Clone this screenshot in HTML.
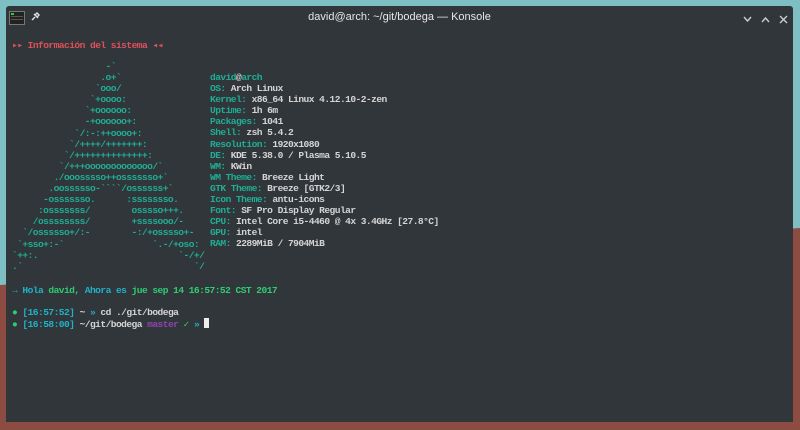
<!DOCTYPE html>
<html><head><meta charset="utf-8"><style>
html,body{margin:0;padding:0;width:800px;height:430px;overflow:hidden;background:#7dbfc2;}
.red{position:absolute;left:0;top:0;width:800px;height:430px;background:#8c4c42;clip-path:polygon(0 285px,800px 228px,800px 430px,0 430px);}
.win{position:absolute;left:6px;top:6px;width:787px;height:416px;background:#31363b;border-radius:3px 3px 0 0;}
.title{position:absolute;left:0;right:0;top:5px;text-align:center;font:11px "Liberation Sans",sans-serif;color:#e6e6e6;}
pre{margin:0;position:absolute;font-family:"Liberation Mono",monospace;font-size:9.6px;letter-spacing:-0.56px;line-height:11.1px;color:#d4d4d4;font-weight:bold;}
.t{color:#1fae94;} .g{color:#2ecc71;} .b{color:#1d99f3;} .r{color:#e0505a;} .p{color:#8e44ad;} .w{color:#d4d4d4;} .cb{color:#1fb2c8;}
.cur{display:inline-block;width:5px;height:10px;background:#eee;vertical-align:-1px;}
</style></head><body>
<div class="red"></div>
<div class="win">
 <svg style="position:absolute;left:3px;top:5px" width="16" height="14"><rect x="0.5" y="0.5" width="15" height="13" fill="#222" stroke="#777"/><rect x="2" y="2" width="3" height="2" fill="#3c3"/><rect x="2" y="5" width="12" height="1" fill="#555"/><rect x="2" y="8" width="12" height="1" fill="#555"/></svg>
 <svg style="position:absolute;left:24px;top:6px" width="10" height="10"><path d="M2 8L5 5M4 2L8 6M5 3L7 1L9 3L7 5" stroke="#ddd" stroke-width="1.5" fill="none"/></svg>
 <div class="title">david@arch: ~/git/bodega — Konsole</div>
 <svg style="position:absolute;left:737px;top:9px" width="45" height="9"><path d="M1 2L4.5 6L8 2M19 7L22.5 3L26 7M37 1L44 8M44 1L37 8" stroke="#ccc" stroke-width="1.4" fill="none"/></svg>
</div>
<pre class="r" style="left:12px;top:40px">▸▸ Información del sistema ◂◂</pre>
<pre class="t" style="left:12px;top:61px">                  -&#96;
                 .o+&#96;
                &#96;ooo/
               &#96;+oooo:
              &#96;+oooooo:
              -+oooooo+:
            &#96;/:-:++oooo+:
           &#96;/++++/+++++++:
          &#96;/++++++++++++++:
         &#96;/+++ooooooooooooo/&#96;
        ./ooosssso++osssssso+&#96;
       .oossssso-&#96;&#96;&#96;&#96;/ossssss+&#96;
      -osssssso.      :ssssssso.
     :osssssss/        osssso+++.
    /ossssssss/        +ssssooo/-
  &#96;/ossssso+/:-        -:/+osssso+-
 &#96;+sso+:-&#96;                 &#96;.-/+oso:
&#96;++:.                           &#96;-/+/
.&#96;                                 &#96;/</pre>
<pre style="left:210px;top:72px"><span class="t">david</span>@<span class="t">arch</span>
<span class="t">OS:</span> Arch Linux
<span class="t">Kernel:</span> x86_64 Linux 4.12.10-2-zen
<span class="t">Uptime:</span> 1h 6m
<span class="t">Packages:</span> 1041
<span class="t">Shell:</span> zsh 5.4.2
<span class="t">Resolution:</span> 1920x1080
<span class="t">DE:</span> KDE 5.38.0 / Plasma 5.10.5
<span class="t">WM:</span> KWin
<span class="t">WM Theme:</span> Breeze Light
<span class="t">GTK Theme:</span> Breeze [GTK2/3]
<span class="t">Icon Theme:</span> antu-icons
<span class="t">Font:</span> SF Pro Display Regular
<span class="t">CPU:</span> Intel Core i5-4460 @ 4x 3.4GHz [27.8°C]
<span class="t">GPU:</span> intel
<span class="t">RAM:</span> 2289MiB / 7904MiB</pre>
<pre style="left:12px;top:285px"><span class="cb">→ Hola</span> <span class="g">david,</span> <span class="cb">Ahora es</span> <span class="g">jue sep 14 16:57:52 CST 2017</span>

<span class="g">●</span> <span class="cb">[16:57:52]</span> ~ <span class="cb">»</span> cd ./git/bodega
<span class="g">●</span> <span class="cb">[16:58:00]</span> ~/git/bodega <span class="p">master</span> <span class="g">✓</span> <span class="cb">»</span> <span class="cur"></span></pre>
</body></html>
